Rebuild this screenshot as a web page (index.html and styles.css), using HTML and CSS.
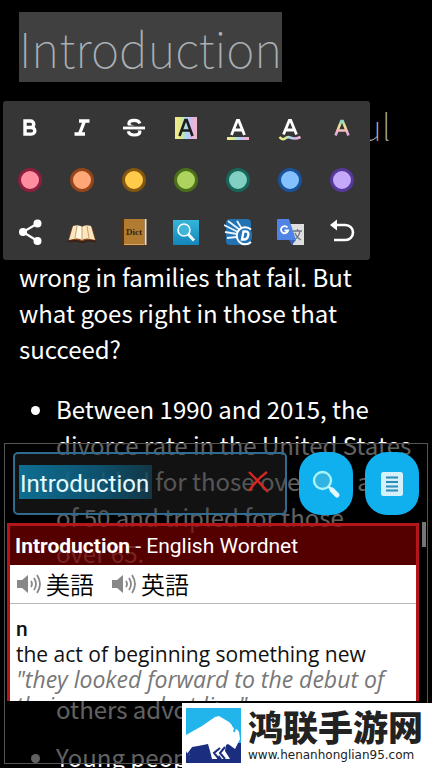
FILE: index.html
```html
<!DOCTYPE html>
<html lang="en">

<head>
    <meta charset="UTF-8">
    <meta name="viewport" content="width=device-width, initial-scale=1.0">
    <title>Introduction</title>
    <link rel="stylesheet" href="styles.css">
</head>

<body>
    <article class="reader">
        <h1><mark>Introduction</mark></h1>
        <h2>The Most Successful</h2>
        <p>
            Most of what we read about<br>
            marriage is bad news. We<br>
            hear a lot about what goes<br>
            wrong in families that fail. But<br>
            what goes right in those that<br>
            succeed?
        </p>
        <ul>
            <li>Between 1990 and 2015, the<br>divorce rate in the United States<br>doubled for those over the age<br>of 50 and tripled for those<br>over 65.</li>
            <li>Some couples prefer to<br>live in separate homes<br>for most of the week;<br>others advocate</li>
            <li>Young people</li>
        </ul>
    </article>

    <div class="toolbar">
        <button aria-label="Bold">
            <svg width="28" height="28" viewBox="0 0 28 28"><path d="M9 7h5.500a3.200 3.200 0 0 1 0 6.500H9zM9 13.500h6.500a3.300 3.300 0 0 1 0 6.600H9z" fill="none" stroke="#fff" stroke-width="3.400"/></svg>
        </button>
        <button aria-label="Italic">
            <svg width="28" height="28" viewBox="0 0 28 28"><path d="M11 7h10.500M6.500 20h10.500M16.500 7L11.500 20" fill="none" stroke="#fff" stroke-width="3.400"/></svg>
        </button>
        <button aria-label="Strikethrough">
            <svg width="28" height="28" viewBox="0 0 28 28"><path d="M19.800 9.500c-.6-2.300-2.800-3.200-5.600-3.200-3.200 0-5.300 1.300-5.300 3.500 0 4.300 11 3.200 11 7.700 0 2.200-2.200 3.500-5.600 3.500-3.300 0-5.500-1.200-6-3.700" fill="none" stroke="#fff" stroke-width="3.200"/><path d="M3 11.500h22v5H3z" fill="#363636"/><path d="M3 12.600h22v2.800H3z" fill="#fff"/></svg>
        </button>
        <button aria-label="Highlight">
            <svg width="28" height="28" viewBox="0 0 28 28">
                <defs>
                    <linearGradient id="rainbow" gradientUnits="userSpaceOnUse" x1="3" y1="0" x2="25" y2="0"><stop offset="0" stop-color="#f6ea88"/><stop offset=".3" stop-color="#d6e88e"/><stop offset=".5" stop-color="#a6d8f4"/><stop offset=".75" stop-color="#d9b8ee"/><stop offset="1" stop-color="#f8b4c0"/></linearGradient>
                    <linearGradient id="pastel" x1="0" y1="0" x2="0" y2="1"><stop offset="0" stop-color="#8ed6c4"/><stop offset=".35" stop-color="#f3e690"/><stop offset=".7" stop-color="#f6b7c3"/><stop offset="1" stop-color="#d6a9ee"/></linearGradient>
                </defs>
                <path d="M3 3h22v22H3z" fill="url(#rainbow)"/><path d="M7.500 22L13.300 6h1.400l5.800 16M10 16.500h8" fill="none" stroke="#1d1d1d" stroke-width="2.600"/>
            </svg>
        </button>
        <button aria-label="Underline">
            <svg width="28" height="28" viewBox="0 0 28 28"><path d="M7.500 21L13.300 6.500h1.400l5.800 14.500M10 16h8" fill="none" stroke="#fff" stroke-width="2.800"/><path d="M3 23h22v3H3z" fill="url(#rainbow)"/></svg>
        </button>
        <button aria-label="Wavy underline">
            <svg width="28" height="28" viewBox="0 0 28 28"><path d="M7.500 20.500L13.300 6.500h1.400l5.800 14M10 16h8" fill="none" stroke="#fff" stroke-width="2.800"/><path d="M3.500 23q3 3.500 5.500 1.500t5-1 5 1 5.500-1.500" fill="none" stroke="url(#rainbow)" stroke-width="2.600"/></svg>
        </button>
        <button aria-label="Text color">
            <svg width="28" height="28" viewBox="0 0 28 28"><path d="M7.500 21.500L13.300 7h1.400l5.800 14.500M10 16.500h8" fill="none" stroke="url(#pastel)" stroke-width="2.600"/></svg>
        </button>

        <button aria-label="Pink"><span class="dot pink"></span></button>
        <button aria-label="Orange"><span class="dot orange"></span></button>
        <button aria-label="Yellow"><span class="dot yellow"></span></button>
        <button aria-label="Green"><span class="dot green"></span></button>
        <button aria-label="Teal"><span class="dot teal"></span></button>
        <button aria-label="Blue"><span class="dot blue"></span></button>
        <button aria-label="Purple"><span class="dot purple"></span></button>

        <button aria-label="Share">
            <svg width="28" height="28" viewBox="0 0 28 28"><path d="M21.500 5.500L7 14l14.500 9" fill="none" stroke="#fff" stroke-width="2.200"/><circle cx="21.500" cy="5.500" r="4" fill="#fff"/><circle cx="7" cy="14" r="4" fill="#fff"/><circle cx="21.500" cy="23" r="4" fill="#fff"/></svg>
        </button>
        <button aria-label="Open book">
            <svg width="30" height="28" viewBox="0 0 30 28"><path d="M1 23L5 9l10-1 10 1 4 14-10-1-4 2-4-2z" fill="#8a4c22"/><path d="M2 22L6 8q6-2 9 1v13q-4-3-13 0zM28 22L24 8q-6-2-9 1v13q4-3 13 0z" fill="#fbe6bd"/><path d="M15 9q-4-2-5 0L8 20q5-1 7 2z" fill="#fff7df"/><path d="M15 9v13M20 8l2 12M10 8L8 20" stroke="#b98c58" stroke-width=".8" fill="none"/><path d="M1 23.500q9-2 14 1 5-3 14-1" fill="none" stroke="#3b2117" stroke-width="2"/></svg>
        </button>
        <button aria-label="Dictionary">
            <svg width="28" height="28" viewBox="0 0 28 28"><path d="M1 1h26v27H1z" fill="#513013"/><path d="M4 1h20v25H4z" fill="#b27b32"/><path d="M24.500 1h2v26h-2z" fill="#e9dfc8"/><path d="M4 26h20v1H4z" fill="#d2a96a"/><text x="14" y="17" class="dict">Dict</text></svg>
        </button>
        <button aria-label="Search">
            <svg width="28" height="28" viewBox="0 0 28 28">
                <defs><linearGradient id="sea" x1="0" y1="0" x2="0" y2="1"><stop offset="0" stop-color="#34b6d8"/><stop offset="1" stop-color="#1385bb"/></linearGradient></defs>
                <path d="M1 2h26v25H1z" fill="url(#sea)"/><circle cx="12" cy="12" r="6" fill="#43b5d8" stroke="#f2fbff" stroke-width="1.600"/><path d="M16 16l6 6.500" stroke="#f2fbff" stroke-width="3"/>
            </svg>
        </button>
        <button aria-label="Quick dictionary">
            <svg width="28" height="28" viewBox="0 0 28 28"><rect x="2" y="1" width="25" height="26" rx="4" fill="#2372b2"/><path d="M4 3l12 9M0 7l14 7M1 14l12 2M3 20l10-1M13 3l5 8" stroke="#e8f4ff" stroke-width="1.800"/><circle cx="20.500" cy="17.500" r="8" fill="#2372b2"/><path d="M27 11.500a8.500 8.500 0 1 0 0 12.500" fill="none" stroke="#fff" stroke-width="2"/><path d="M19.500 13.500h2.500q3 0 2.200 4t-4.200 4h-2z" fill="none" stroke="#fff" stroke-width="2.400"/></svg>
        </button>
        <button aria-label="Translate">
            <svg width="28" height="28" viewBox="0 0 28 28"><path d="M12 6h16v21H17z" fill="#dedede"/><path d="M17 13h9M21.500 11v2M24 13q-1 6-6 9M19 15q2 5 6 7" fill="none" stroke="#6d7780" stroke-width="1.300"/><path d="M13 22h7l-4 5z" fill="#3b62b5"/><path d="M2 1h11l7 21H2q-1 0-1-1V2q0-1 1-1z" fill="#4f83e6"/><path d="M11.500 9.500a3.600 3.600 0 1 0 .6 3H8.500" fill="none" stroke="#fff" stroke-width="1.800"/></svg>
        </button>
        <button aria-label="Back">
            <svg width="28" height="28" viewBox="0 0 28 28"><path d="M4 7h13.500a7 7 0 0 1 0 15H6" fill="none" stroke="#fff" stroke-width="2.600"/><path d="M2 7l7-5.500v11z" fill="#fff"/></svg>
        </button>
    </div>

    <section class="lookup">
        <form class="search">
            <div class="field">
                <input type="text" aria-label="Word" value="Introduction">
                <button type="button" class="clear" aria-label="Clear">
                    <svg width="24" height="24" viewBox="0 0 24 24"><path d="M2 2q8 8 19 20M20 2Q10 9 2 21" fill="none" stroke="#d7251f" stroke-width="2.400"/></svg>
                </button>
            </div>
            <button type="button" class="action" aria-label="Search">
                <svg width="32" height="32" viewBox="0 0 32 32"><circle cx="12.500" cy="12.500" r="8.500" fill="#32b4e2" stroke="#a9f3fa" stroke-width="2.400"/><path d="M18.500 18.500l3 3" stroke="#c5f5fb" stroke-width="2.500"/><path d="M22 22l5 5" stroke="#e2f8fc" stroke-width="5" stroke-linecap="round"/></svg>
            </button>
            <button type="button" class="action" aria-label="History">
                <svg width="24" height="26" viewBox="0 0 24 26"><rect x="1" y="1" width="22" height="24" rx="2.500" fill="#d3f0fb"/><path d="M6 6.500h12M6 11h12M6 15.500h12M6 19.500h12" stroke="#2a8db8" stroke-width="1.800"/></svg>
            </button>
        </form>

        <div class="card">
            <h3><b>Introduction</b> - English Wordnet</h3>
            <div class="entry">
                <div class="voices">
                    <button class="voice" lang="ja">
                        <svg width="26" height="24" viewBox="0 0 26 24"><path d="M1 8h5l6-5v18l-6-5H1z" fill="#888"/><path d="M15 9q2 3 0 6M18 6q4 6 0 12M21 3q6 9 0 18" fill="none" stroke="#888" stroke-width="1.800"/></svg>美語
                    </button>
                    <button class="voice" lang="ja">
                        <svg width="26" height="24" viewBox="0 0 26 24"><path d="M1 8h5l6-5v18l-6-5H1z" fill="#888"/><path d="M15 9q2 3 0 6M18 6q4 6 0 12M21 3q6 9 0 18" fill="none" stroke="#888" stroke-width="1.800"/></svg>英語
                    </button>
                </div>
                <div class="sense">
                    <b class="pos">n</b>
                    <div>the act of beginning something new</div>
                    <i>"they looked forward to the debut of<br>their new product line"</i>
                </div>
            </div>
        </div>
        <div class="thumb"></div>
    </section>

    <footer class="site">
        <svg width="55" height="55" viewBox="0 0 55 55">
            <path d="M0 0h55v55H0z" fill="#21b5ec"/>
            <path d="M0 35h55v20H0z" fill="#1b2d7e"/>
            <path d="M0 27L16 18 29 9l4-1 10 6 4 4 3 2 3 4 1 7-2 4-3 6-4-3-3-2-2 1-1 6 5 8h-8l-3-4-2 4h-5l-2-8-2-7-10 2-6 1-3 5 1 7H4L0 43z" fill="#fff"/>
            <path d="M11 41l-5 5 4 5M6 41l-4 5 3 5M34 40l-6 5 5 6M39 39l-5 6 5 6" fill="none" stroke="#1b2d7e" stroke-width="2"/>
            <path d="M48 12c-3 4-1 6 1 8l-1 4M48 17l3 4" fill="none" stroke="#21b5ec" stroke-width="2"/>
        </svg>
        <div class="site-text">
            <strong lang="zh">鸿联手游网</strong>
            <span>www.henanhonglian95.com</span>
        </div>
    </footer>
</body>

</html>
```
FILE: styles.css
```css
* {
    box-sizing: border-box;
}

body {
    margin: 0;
    height: 100vh;
    overflow: hidden;
    position: relative;
    background-color: #000;
    color: #fff;
    font-family: "Noto Sans CJK SC", sans-serif;
}

button {
    padding: 0;
    border: 0;
    background: none;
    cursor: pointer;
}

svg {
    display: block;
    flex: none;
}

/* book page */
.reader {
    padding: 12px 19px;
    font-size: 24px;
    line-height: 36px;
    white-space: nowrap;
}

.reader h1,
.reader h2 {
    margin: 0;
    font-weight: 100;
    color: #aab0b4;
}

.reader h1 {
    font-size: 48px;
    line-height: 70px;
}

.reader mark {
    color: inherit;
    background-color: #404040;
}

.reader h2 {
    margin-top: 17px;
    padding-right: 22px;
    font-size: 36px;
    line-height: 52px;
    text-align: right;
}

.reader p {
    margin: 0;
}

.reader ul {
    margin: 24px 0 0;
    padding-left: 37px;
}

.reader li {
    margin-bottom: 12px;
}

/* selection toolbar */
.toolbar {
    position: absolute;
    top: 101px;
    left: 3px;
    display: grid;
    grid-template-columns: repeat(7, 52px);
    grid-auto-rows: 52px;
    padding: 1px 2px 2px 1px;
    border-radius: 3px;
    background-color: #363636;
}

.toolbar button {
    display: flex;
    align-items: center;
    justify-content: center;
}

.dict {
    font: bold 9px "Liberation Serif", serif;
    text-anchor: middle;
    fill: #3a210c;
}

.dot {
    width: 24px;
    height: 24px;
    border: 3px solid;
    border-radius: 50%;
}

.pink { background-color: #ff8f9f; border-color: #8a1f3e; }
.orange { background-color: #ffa877; border-color: #96451b; }
.yellow { background-color: #ffcb49; border-color: #84560f; }
.green { background-color: #afd35f; border-color: #4b701a; }
.teal { background-color: #82cfc3; border-color: #18655a; }
.blue { background-color: #83c1ff; border-color: #1a529a; }
.purple { background-color: #c4a9fb; border-color: #54399a; }

/* dictionary popup */
.lookup {
    position: absolute;
    top: 443px;
    left: 4px;
    right: 4px;
    bottom: 4px;
    padding: 8px 8px 0 2px;
    border: 1px solid #555;
    background-color: rgba(0, 0, 0, 0.62);
}

.search {
    display: flex;
    gap: 12px;
    padding-left: 6px;
    margin-bottom: 8px;
}

.field {
    position: relative;
    flex: 1;
}

.field input {
    width: 100%;
    height: 63px;
    padding: 0 46px 0 5px;
    border: 2px solid #2f6c92;
    border-radius: 5px;
    background: linear-gradient(90deg, rgba(14, 120, 160, 0.9), rgba(13, 92, 125, 0.85) 60%, rgba(18, 70, 92, 0.7)) 4px 11px / 133px 34px no-repeat, rgba(60, 60, 60, 0.3);
    color: #e4fbff;
    font-family: Roboto, sans-serif;
    font-size: 24px;
}

.clear {
    position: absolute;
    top: 18px;
    right: 16px;
}

.action {
    display: flex;
    align-items: center;
    justify-content: center;
    width: 54px;
    height: 63px;
    border-radius: 22px;
    background-color: #10afee;
}

.card {
    height: 178px;
    overflow: hidden;
    border: 3px solid #b5161a;
    border-bottom: 0;
}

.card h3 {
    margin: 0;
    padding: 2px 0 0 5px;
    background-color: rgba(130, 0, 0, 0.65);
    font: 21px/37px Roboto, sans-serif;
}

.entry {
    height: 136px;
    background-color: #fff;
    color: #111;
}

.voices {
    display: flex;
    gap: 17px;
    padding-left: 6px;
    border-bottom: 1px solid #bbb;
}

.voice {
    display: flex;
    align-items: center;
    gap: 4px;
    height: 38px;
    color: #000;
    font-family: "Noto Sans CJK JP", sans-serif;
    font-size: 24px;
    font-weight: 350;
    line-height: 34px;
}

.sense {
    padding: 12px 6px 0;
    font: 21px/25px "Open Sans", sans-serif;
    white-space: nowrap;
}

.pos {
    font-family: Roboto, sans-serif;
    font-weight: 500;
}

.sense i {
    color: #777;
    font-size: 23px;
}

.thumb {
    position: absolute;
    top: 78px;
    right: 1px;
    width: 4px;
    height: 25px;
    background-color: #777;
}

/* site banner */
.site {
    position: absolute;
    right: 0;
    bottom: 0;
    display: flex;
    align-items: center;
    gap: 7px;
    width: 250px;
    height: 65px;
    padding-left: 4px;
    background-color: #fff;
    color: #222;
}

.site-text {
    display: flex;
    flex-direction: column;
}

.site strong {
    font-size: 35px;
    line-height: 38px;
    font-weight: 900;
}

.site span {
    font: 12px/20px "DejaVu Sans", sans-serif;
}
```
